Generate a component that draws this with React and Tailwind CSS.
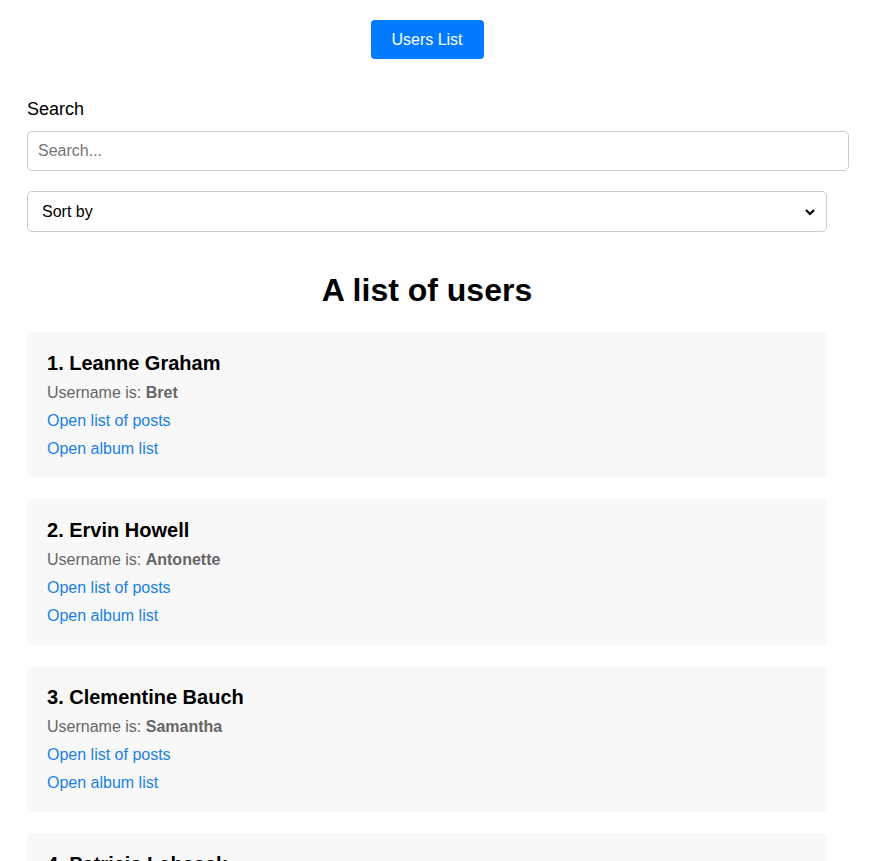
import React, { useState } from 'react';

const users = [
  { id: 1, name: 'Leanne Graham', username: 'Bret' },
  { id: 2, name: 'Ervin Howell', username: 'Antonette' },
  { id: 3, name: 'Clementine Bauch', username: 'Samantha' },
  { id: 4, name: 'Patricia Lebsack', username: 'Karianne' },
];

const App = () => {
  const [query, setQuery] = useState('');

  return (
    <div className="min-h-screen bg-white text-black font-['Liberation_Sans',Arial,sans-serif]">
      <div className="px-[27px]">
        <div className="w-[800px] flex justify-center pt-5">
          <button className="w-[113px] h-[39px] bg-[#007bff] text-white text-base rounded-[4px]">
            Users List
          </button>
        </div>

        <div className="pt-[40px]">
          <label className="block text-lg leading-[21px] mb-[11px]">Search</label>
          <input
            value={query}
            onChange={e => setQuery(e.target.value)}
            placeholder="Search..."
            className="block w-[822px] h-[40px] px-[10px] text-base border border-[#ccc] rounded-[5px] placeholder:text-[#757575] outline-none"
          />

          <div className="mt-[20px] w-[800px] h-[41px] border border-[#ccc] rounded-[5px] flex items-center justify-between pl-[14px] pr-[10px]">
            <span className="text-base">Sort by</span>
            <svg width="12" height="12" viewBox="0 0 12 12" fill="none">
              <path d="M2 4l4 4 4-4" stroke="#000" strokeWidth="2.2" />
            </svg>
          </div>

          <h1 className="w-[800px] text-center text-[32px] font-bold leading-[37px] mt-[40px] mb-[23px]">
            A list of users
          </h1>

          <div className="flex flex-col gap-[21px] w-[800px]">
            {users.map(user => (
              <div key={user.id} className="bg-[#f8f8f8] rounded-[6px] px-5 pt-[19px] pb-[17px] flex flex-col">
                <h3 className="text-xl font-bold leading-6">{user.id}. {user.name}</h3>
                <p className="mt-[6px] text-base leading-6 text-[#666]">
                  Username is: <b>{user.username}</b>
                </p>
                <a href="#" className="mt-1 text-base leading-6 text-[#1a80e6] w-fit">Open list of posts</a>
                <a href="#" className="mt-1 text-base leading-6 text-[#1a80e6] w-fit">Open album list</a>
              </div>
            ))}
          </div>
          <div className="h-10" />
        </div>
      </div>
    </div>
  );
};

export default App;
